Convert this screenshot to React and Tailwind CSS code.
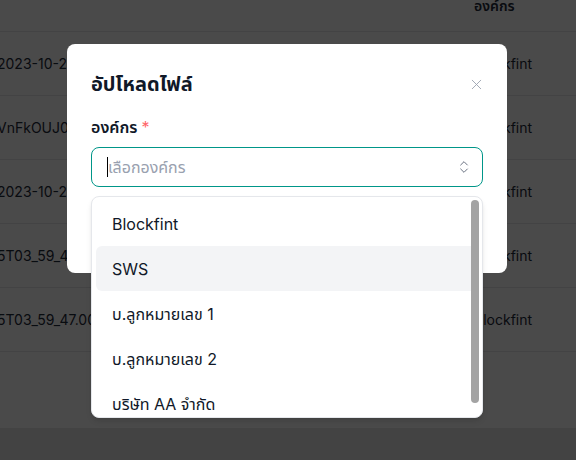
import { ChevronsUpDown, X } from "lucide-react";

const rows = [
  { file: "2023-10-25_report_final.xlsx", org: "Blockfint" },
  { file: "VnFkOUJ0aGx3_upload.pdf", org: "Blockfint" },
  { file: "2023-10-25_summary.csv", org: "Blockfint" },
  { file: "5T03_59_47.000Z_data.xlsx", org: "Blockfint" },
  { file: "5T03_59_47.000Z_backup.xlsx", org: "Blockfint" },
];

const options = ["Blockfint", "SWS", "บ.ลูกหมายเลข 1", "บ.ลูกหมายเลข 2", "บริษัท AA จำกัด", "บริษัท BB จำกัด"];

function App() {
  return (
    <div
      className="relative h-[460px] w-[576px] overflow-hidden bg-[#e5e5e5]"
      style={{ fontFamily: 'Inter, "Noto Sans Thai", "Noto Sans Thai UI", "Noto Sans", sans-serif' }}
    >
      {/* page behind the modal */}
      <div className="h-[428px] overflow-hidden bg-white">
        <div className="-mt-[20px] text-sm text-gray-800">
          <div className="grid h-[52px] grid-cols-[474px_1fr] items-center border-b border-gray-200 font-semibold">
            <div />
            <div>องค์กร</div>
          </div>
          {rows.map((row) => (
            <div
              key={row.file}
              className="grid h-[64px] grid-cols-[474px_1fr] items-center border-b border-gray-200"
            >
              <div className="-ml-[3px] whitespace-nowrap">{row.file}</div>
              <div>{row.org}</div>
            </div>
          ))}
        </div>
      </div>

      {/* overlay */}
      <div className="absolute inset-0 bg-black/[0.71]" />

      {/* modal */}
      <div className="absolute left-[67px] top-[44px] w-[440px] rounded-lg bg-white px-6 pb-[86px] pt-6 text-gray-900">
        <div className="flex h-8 items-center justify-between">
          <h3 className="text-xl font-bold">อัปโหลดไฟล์</h3>
          <X size={17} strokeWidth={1.25} className="-mr-[2px] text-gray-400" />
        </div>
        <div className="mt-[15px] text-base font-semibold leading-6">
          องค์กร <span className="font-normal text-red-400">*</span>
        </div>
        <div className="mt-2 flex h-10 items-center rounded-lg border border-teal-600 pl-[15px] pr-[10px]">
          <span className="h-5 w-px bg-black" />
          <span className="flex-1 text-base text-gray-400">เลือกองค์กร</span>
          <ChevronsUpDown size={16} strokeWidth={1.5} className="text-gray-500" />
        </div>
      </div>

      {/* dropdown list */}
      <div className="absolute left-[91px] top-[196px] h-[222px] w-[392px] overflow-hidden rounded-lg border border-gray-200 bg-white p-1 shadow-md">
        {options.map((opt) => (
          <div
            key={opt}
            className={
              opt === "SWS"
                ? "flex h-[45px] items-center rounded-md bg-gray-100 pl-4 text-base text-gray-900"
                : "flex h-[45px] items-center rounded-md pl-4 text-base text-gray-900"
            }
          >
            {opt}
          </div>
        ))}
        <div className="absolute right-[3px] top-[3px] h-[203px] w-[8px] rounded-full bg-[#a3a3a3]" />
      </div>
    </div>
  );
}

export default App;
